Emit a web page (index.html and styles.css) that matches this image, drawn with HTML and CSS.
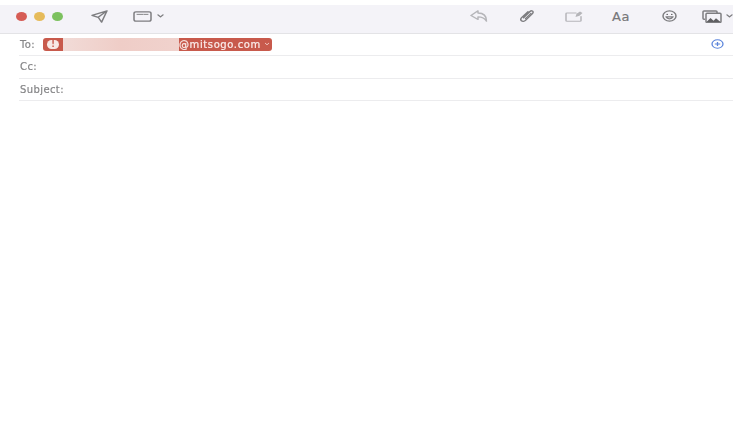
FILE: index.html
```html
<!DOCTYPE html>
<html lang="en">
<head>
<meta charset="utf-8">
<title>New Message</title>
<link rel="stylesheet" href="styles.css">
</head>
<body>
<main class="window">
  <header class="toolbar">
    <div class="lights">
      <span class="light red"></span><span class="light yellow"></span><span class="light green"></span>
    </div>
    <svg class="icon send" width="17" height="13" viewBox="0 0 17 15" preserveAspectRatio="none"><path d="M16 1 1 6.200l6.200 2.200L10.600 14 16 1ZM16 1 7.200 8.400"/></svg>
    <svg class="icon header-btn" width="19" height="11" viewBox="0 0 19 13" preserveAspectRatio="none"><rect x="1" y="1" width="17" height="11" rx="2"/><path d="M4 4h6M11 4h4" class="thin"/></svg>
    <svg class="icon chev-a" width="7" height="4" viewBox="0 0 7 5" preserveAspectRatio="none"><path d="m1 1 2.500 2.500L6 1"/></svg>
    <svg class="icon pale reply" width="18" height="12" viewBox="0 0 18 14" preserveAspectRatio="none"><path d="M8 1 1 6.500 8 11V8c3.500 0 6.500 1 8.500 5 0-6-3-9.500-8.500-9.500V1Z"/></svg>
    <svg class="icon clip" width="16" height="14" viewBox="0 0 16 16" preserveAspectRatio="none"><path d="M4.500 10 11 2.800c1-1.100 2.600-1 3 .2.300 1-.1 1.800-.8 2.600L6.500 13c-1.200 1.300-3 1.500-4 .5s-.8-2.600.3-3.900L9 3"/><path d="M6.500 11 12 5"/></svg>
    <svg class="icon pale note" width="18" height="11" viewBox="0 0 18 14" preserveAspectRatio="none"><path d="M11 2.500H2a1 1 0 0 0-1 1V12a1 1 0 0 0 1 1h13a1 1 0 0 0 1-1V7"/><path class="solid" d="m10.500 7.500 1-4L15 .5l2.500 2-3 3.500-4 1.500Z"/></svg>
    <span class="font-btn">Aa</span>
    <svg class="icon smile" width="15" height="12" viewBox="0 0 15 15" preserveAspectRatio="none"><circle cx="7.500" cy="7.500" r="6.500"/><path d="M4 8.500c1.500 3.500 5.500 3.500 7 0Z"/><circle class="solid" cx="5.200" cy="5.500" r=".8"/><circle class="solid" cx="9.800" cy="5.500" r=".8"/></svg>
    <svg class="icon photo" width="20" height="13" viewBox="0 0 20 14" preserveAspectRatio="none"><path d="M2.500 10H2a1 1 0 0 1-1-1V2a1 1 0 0 1 1-1h12a1 1 0 0 1 1 1v1"/><rect x="4" y="3.500" width="15" height="10" rx="1"/><path class="solid" d="m4.500 13 4-4.500 3 3 2.500-2.500 4.500 4Z"/></svg>
    <svg class="icon chev-b" width="7" height="4" viewBox="0 0 7 5" preserveAspectRatio="none"><path d="m1 1 2.500 2.500L6 1"/></svg>
  </header>

  <section class="fields">
    <div class="field to">
      <span class="label to-label">To:</span>
      <span class="pill">
        <span class="alert"><span class="alert-dot">!</span></span>
        <span class="redacted"></span>
        <span class="address">@mitsogo.com</span>
        <svg class="pill-chev" width="6" height="4" viewBox="0 0 6 4"><path d="m1 1 2 1.800L5 1"/></svg>
      </span>
      <svg class="add" width="13" height="10" viewBox="0 0 13 13" preserveAspectRatio="none"><circle cx="6.500" cy="6.500" r="5.500"/><path d="M6.500 3.800v5.400M3.800 6.500h5.400"/></svg>
    </div>
    <div class="field cc"><span class="label">Cc:</span></div>
    <div class="field subject"><span class="label">Subject:</span></div>
  </section>
</main>
</body>
</html>
```

FILE: styles.css
```css
html, body {
  margin: 0;
  height: 100%;
  background: #fff;
}

body {
  overflow: hidden;
  font-family: "DejaVu Sans", "Liberation Sans", sans-serif;
}

.window {
  width: 733px;
  padding-top: 5px;
  filter: blur(.6px);
}

.toolbar {
  display: flex;
  align-items: center;
  height: 22px;
  padding-bottom: 6px;
  background: #f4f3f8;
  border-bottom: 1px solid #e3e3e6;
}

.lights {
  display: flex;
  gap: 7px;
  margin-left: 16px;
}

.light {
  width: 11px;
  height: 9px;
  border-radius: 50%;
}

.red { background: #d65c55; }
.yellow { background: #e6bb5a; }
.green { background: #7cc15f; }

.icon {
  flex: none;
  fill: none;
  stroke: #7d7d80;
  stroke-width: 1.500;
  stroke-linejoin: round;
  stroke-linecap: round;
}

.icon.pale { stroke: #b5b5b9; }
.icon .solid { fill: currentColor; stroke: none; color: #5f5f62; }
.icon.pale .solid { color: #b5b5b9; }
.icon .thin { stroke-width: 1; }

.send { margin-left: 28px; }
.header-btn { margin-left: 25px; }
.chev-a { margin-left: 5px; }
.reply { margin-left: 306px; }
.clip { margin-left: 31px; }
.note { margin-left: 30px; }

.font-btn {
  flex: none;
  width: 20px;
  margin-left: 29px;
  font-size: 13px;
  letter-spacing: .5px;
  color: #77777a;
  -webkit-text-stroke: .2px #77777a;
}

.smile { margin-left: 30px; }
.photo { margin-left: 25px; }
.chev-b { margin-left: 4px; }

.fields {
  margin-left: 19px;
}

.field {
  display: flex;
  align-items: center;
  box-sizing: border-box;
  border-bottom: 1px solid #ececee;
  padding: 0 0 1px 1px;
}

.to { height: 22px; }
.cc { height: 23px; }
.subject { height: 22px; }

.label {
  font-size: 10px;
  letter-spacing: .4px;
  color: #858587;
  -webkit-text-stroke: .2px #858587;
}

.to-label {
  flex: none;
  width: 23px;
}

.pill {
  display: flex;
  align-items: center;
  width: 229px;
  height: 13px;
  border-radius: 3px;
  background: #c85a4c;
  overflow: hidden;
}

.alert {
  display: flex;
  align-items: center;
  justify-content: center;
  flex: none;
  width: 20px;
  height: 13px;
}

.alert-dot {
  width: 12px;
  height: 9px;
  border-radius: 5px;
  background: #f7e9e6;
  color: #c85a4c;
  font-size: 8px;
  font-weight: 700;
  line-height: 9px;
  text-align: center;
}

.redacted {
  flex: none;
  width: 116px;
  height: 13px;
  background: linear-gradient(90deg, #f1dbd7, #efcdc7 50%, #f0d2cd);
}

.address {
  flex: none;
  font-size: 10px;
  letter-spacing: .6px;
  color: #fbeeec;
  -webkit-text-stroke: .2px #fbeeec;
}

.pill-chev {
  margin-left: 3px;
  fill: none;
  stroke: #eec5be;
}

.add {
  margin-left: auto;
  margin-right: 9px;
  fill: none;
  stroke: #5b85dc;
  stroke-width: 1.300;
}
```
